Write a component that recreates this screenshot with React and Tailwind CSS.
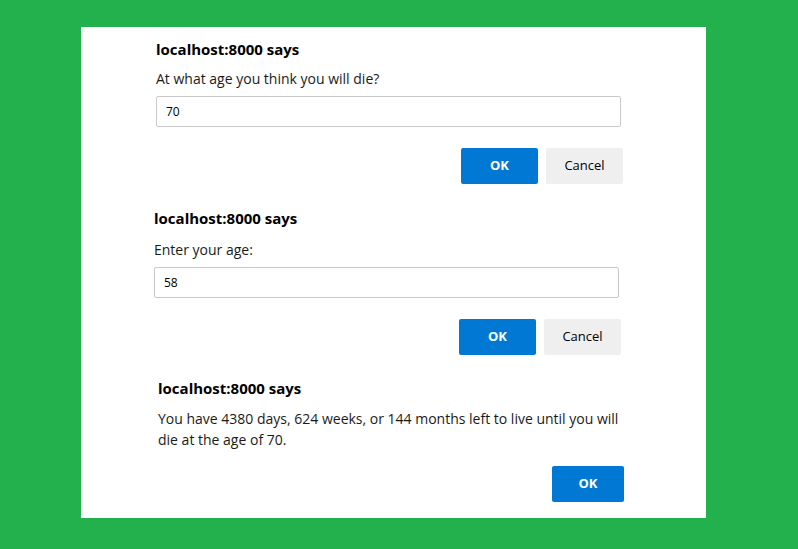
import React from 'react';

const font = { fontFamily: '"Open Sans", "Noto Sans", sans-serif' };

// Eine Browser-Dialogbox (prompt / alert)
const PromptBox = ({ className, message, value }) => (
  <div className={className}>
    <p className="text-[15px] leading-[20px] font-bold text-black">localhost:8000 says</p>
    {message}
    {value !== undefined && (
      <div className="mt-[7px] w-[465px] h-[31px] border border-[#c9c9c9] rounded-[2px] flex items-center pl-[9px] text-[12px] text-black">
        {value}
      </div>
    )}
  </div>
);

const Buttons = ({ className, showCancel = true }) => (
  <div className={`flex justify-end gap-[8px] ${className}`}>
    <button className="w-[77px] h-[36px] bg-[#0078d4] rounded-[2px] text-white text-[13px] font-bold">OK</button>
    {showCancel && (
      <button className="w-[77px] h-[36px] bg-[#efefef] rounded-[2px] text-black text-[13px] font-medium">Cancel</button>
    )}
  </div>
);

export default function App() {
  return (
    <div className="min-h-screen w-full bg-[#22b14c] pt-[27px] pl-[81px]" style={font}>
      <div className="w-[625px] h-[491px] bg-white flex flex-col">
        {/* Dialog 1 */}
        <div className="ml-[75px] mt-[12px] w-[467px]">
          <PromptBox
            message={<p className="mt-[10px] text-[14px] leading-[20px] text-[#1a1a1a]">At what age you think you will die?</p>}
            value="70"
          />
          <Buttons className="mt-[21px]" />
        </div>

        {/* Dialog 2 */}
        <div className="ml-[73px] mt-[24px] w-[467px]">
          <PromptBox
            message={<p className="mt-[12px] text-[14px] leading-[20px] text-[#1a1a1a]">Enter your age:</p>}
            value="58"
          />
          <Buttons className="mt-[21px]" />
        </div>

        {/* Dialog 3 */}
        <div className="ml-[77px] mt-[23px] w-[466px]">
          <PromptBox
            message={
              <p className="mt-[10px] text-[14px] leading-[21px] text-[#1a1a1a]">
                You have 4380 days, 624 weeks, or 144 months left to live until you will die at the age of 70.
              </p>
            }
          />
          <div className="mt-[16px] flex justify-end">
            <button className="w-[72px] h-[36px] bg-[#0078d4] rounded-[2px] text-white text-[13px] font-bold">OK</button>
          </div>
        </div>
      </div>
    </div>
  );
}
